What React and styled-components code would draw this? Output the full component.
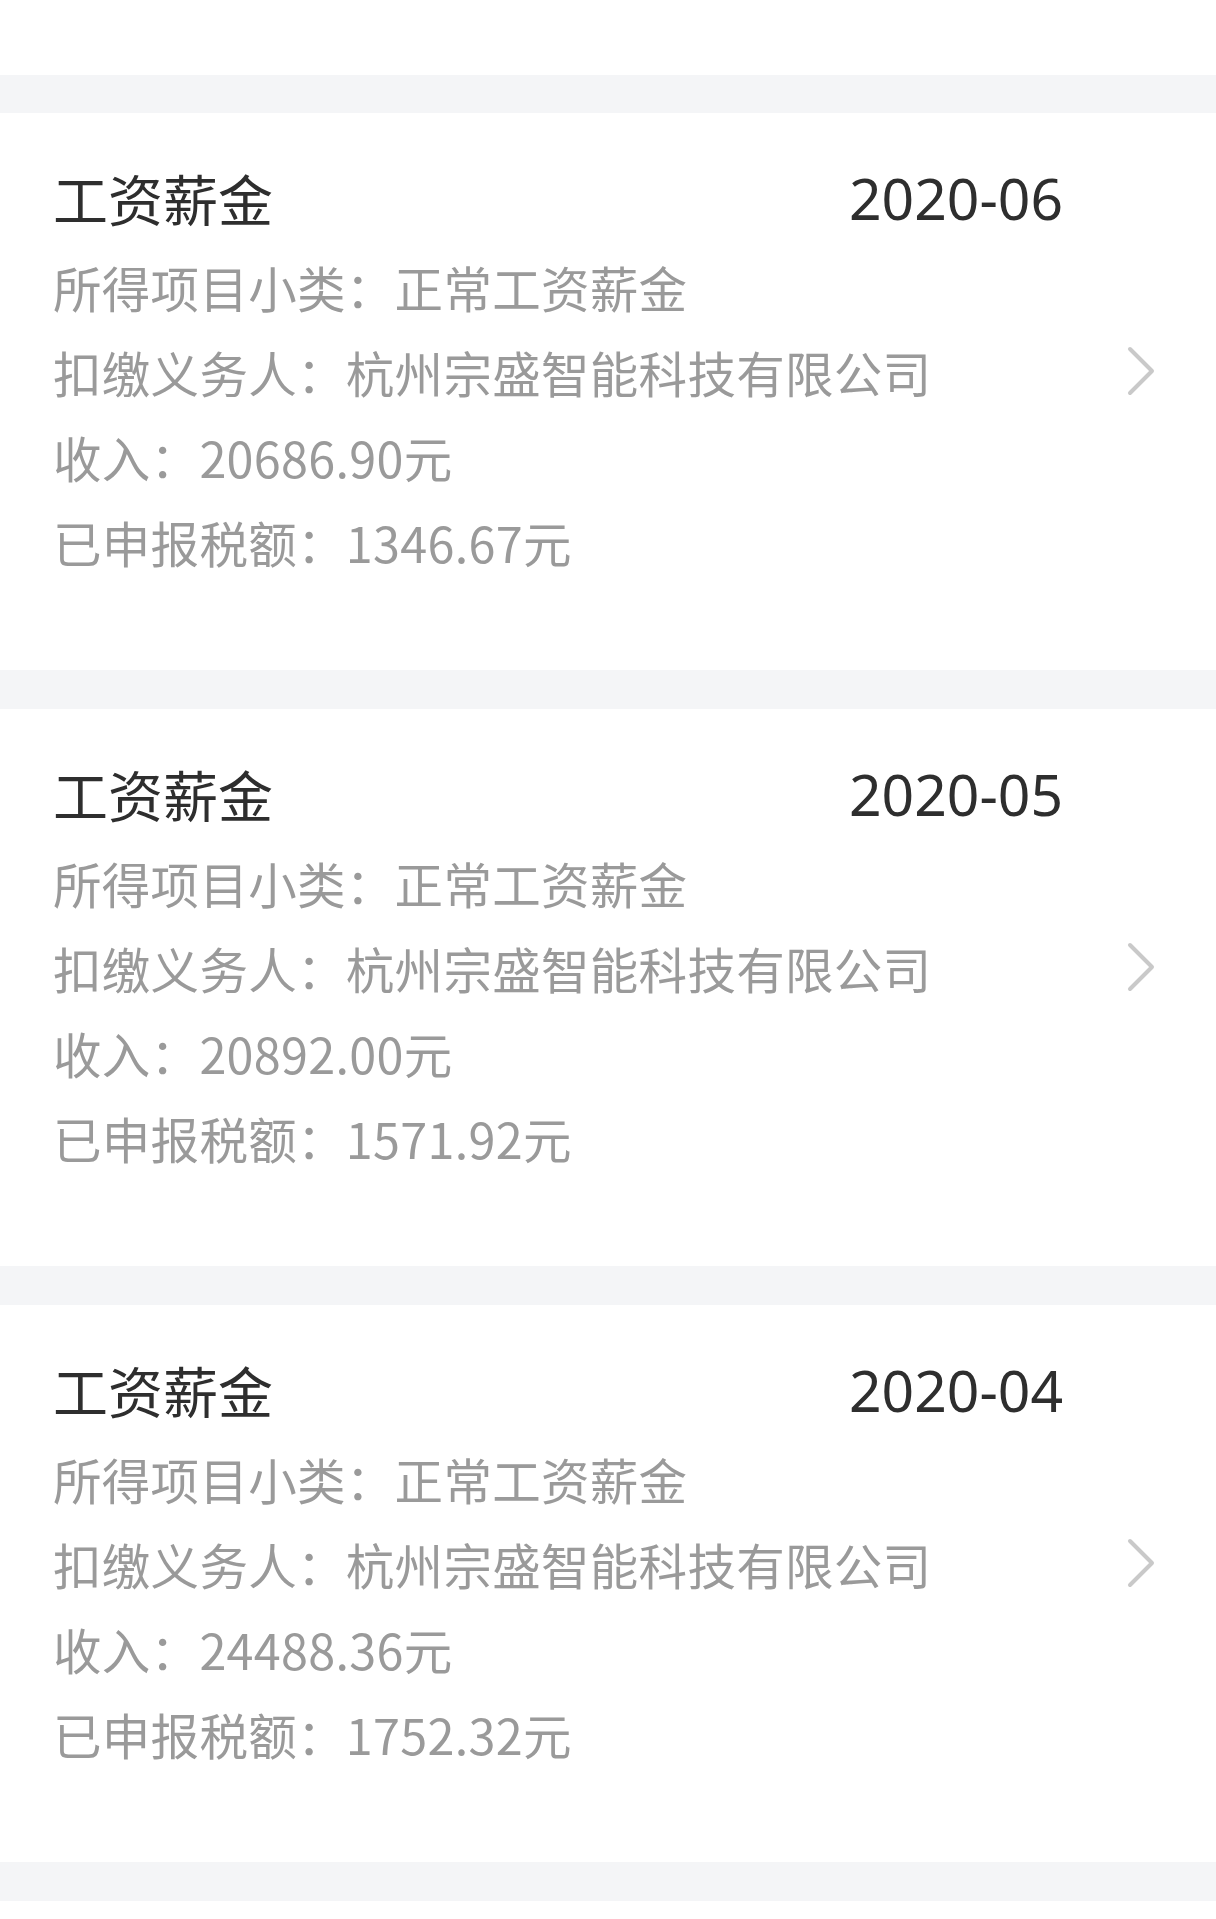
import React from "react";
import styled, { createGlobalStyle } from "styled-components";

const records = [
  { month: "2020-06", income: "20686.90", tax: "1346.67" },
  { month: "2020-05", income: "20892.00", tax: "1571.92" },
  { month: "2020-04", income: "24488.36", tax: "1752.32" },
];

function Chevron() {
  return (
    <Arrow viewBox="0 0 28 50" aria-hidden="true">
      <path d="M3 3 L25 25 L3 47" fill="none" stroke="#c9c9c9" strokeWidth="4" strokeLinecap="round" strokeLinejoin="round" />
    </Arrow>
  );
}

function IncomeCard({ item }) {
  return (
    <Card>
      <Content>
        <TitleRow>
          <Title>工资薪金</Title>
          <Month>{item.month}</Month>
        </TitleRow>
        <Line>所得项目小类：正常工资薪金</Line>
        <Line>扣缴义务人：杭州宗盛智能科技有限公司</Line>
        <Line>收入：{item.income}元</Line>
        <Line>已申报税额：{item.tax}元</Line>
      </Content>
      <Chevron />
    </Card>
  );
}

export default function App() {
  return (
    <>
      <GlobalStyle />
      <Page>
        <TopBlank />
        <List>
          {records.map((item) => (
            <IncomeCard key={item.month} item={item} />
          ))}
          <Card $tail />
        </List>
      </Page>
    </>
  );
}

const GlobalStyle = createGlobalStyle`
  html, body {
    margin: 0;
    padding: 0;
    background: #ffffff;
  }
  body {
    font-family: "Noto Sans CJK SC", "Noto Sans", sans-serif;
  }
`;

const Page = styled.div`
  width: 1216px;
  height: 1919px;
  overflow: hidden;
  background: #f4f5f7;
`;

const TopBlank = styled.div`
  height: 75px;
  background: #ffffff;
`;

const List = styled.div`
  display: flex;
  flex-direction: column;
  gap: 39px;
  padding-top: 38px;
`;

const Card = styled.section`
  display: flex;
  align-items: center;
  gap: 64px;
  height: ${(p) => (p.$tail ? "40px" : "557px")};
  box-sizing: border-box;
  padding: 55px 61px 86px 53px;
  background: #ffffff;
`;

const Content = styled.div`
  flex: 1;
  display: flex;
  flex-direction: column;
`;

const TitleRow = styled.div`
  display: flex;
  justify-content: space-between;
  align-items: flex-start;
  margin-bottom: 17px;
`;

const Title = styled.h3`
  margin: 0;
  font-size: 55px;
  line-height: 60px;
  font-weight: 400;
  color: #2e2e2e;
`;

const Month = styled.span`
  font-family: "Noto Sans", "Noto Sans CJK SC", sans-serif;
  font-size: 57px;
  line-height: 60px;
  margin-top: 1px;
  color: #2e2e2e;
`;

const Line = styled.p`
  margin: 0;
  font-size: 48.5px;
  letter-spacing: 0.3px;
  line-height: 85px;
  color: #9a9a9a;
  white-space: nowrap;
`;

const Arrow = styled.svg`
  flex: none;
  width: 28px;
  height: 50px;
  margin-bottom: 10px;
`;
